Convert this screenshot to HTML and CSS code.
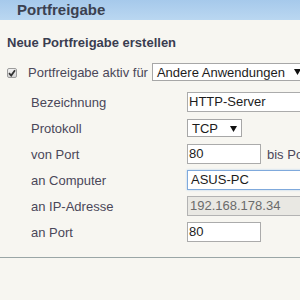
FILE: index.html
```html
<!DOCTYPE html>
<html lang="de">
<head>
    <meta charset="UTF-8">
    <title>Portfreigabe</title>
    <link rel="stylesheet" href="styles.css">
</head>
<body>
    <div class="header">Portfreigabe</div>
    <div class="content">
        <h2>Neue Portfreigabe erstellen</h2>
        <div class="active-row">
            <span class="check">
                <svg width="8" height="8" viewBox="0 0 8 8"><path d="M1 4.2 L3.2 6.5 L7 1.2" fill="none" stroke="#333" stroke-width="1.8"/></svg>
            </span>
            <span class="active-label">Portfreigabe aktiv für</span>
            <div class="select select-wide">Andere Anwendungen
                <svg class="arrow" width="7" height="6" viewBox="0 0 7 6"><path d="M0 0 H7 L3.5 6 Z" fill="#111"/></svg>
            </div>
        </div>
        <div class="fields">
            <div class="label">Bezeichnung</div>
            <div class="value"><div class="input input-long">HTTP-Server</div></div>

            <div class="label">Protokoll</div>
            <div class="value">
                <div class="select select-small">TCP
                    <svg class="arrow" width="7" height="6" viewBox="0 0 7 6"><path d="M0 0 H7 L3.5 6 Z" fill="#111"/></svg>
                </div>
            </div>

            <div class="label">von Port</div>
            <div class="value"><div class="input input-port">80</div><span class="bis">bis Port</span></div>

            <div class="label">an Computer</div>
            <div class="value"><div class="input input-long focused">ASUS-PC</div></div>

            <div class="label">an IP-Adresse</div>
            <div class="value"><div class="input input-long disabled">192.168.178.34</div></div>

            <div class="label">an Port</div>
            <div class="value"><div class="input input-port">80</div></div>
        </div>
    </div>
    <div class="divider"></div>
</body>
</html>
```

FILE: styles.css
```css
* {
    box-sizing: border-box;
    margin: 0;
    padding: 0;
}
html, body {
    overflow: hidden;
}
body {
    font-family: "Liberation Sans", Arial, sans-serif;
    font-size: 13px;
    background: #f7f6f1;
    color: #4a4759;
    width: 300px;
    height: 300px;
}
.header {
    height: 20px;
    line-height: 20px;
    padding-left: 17px;
    font-size: 15px;
    font-weight: bold;
    color: #3b4150;
    background: linear-gradient(to bottom, #a6c9eb, #bad7f1);
    white-space: nowrap;
}
.content {
    padding-left: 7px;
}
h2 {
    font-size: 13px;
    line-height: 16px;
    font-weight: bold;
    color: #3a3d50;
    margin-top: 15px;
    white-space: nowrap;
}
.active-row {
    display: flex;
    align-items: center;
    height: 18px;
    margin-top: 12px;
    white-space: nowrap;
}
.check {
    width: 10px;
    height: 10px;
    border: 1px solid #9c9c9c;
    border-radius: 2px;
    background: linear-gradient(to bottom, #f2f2f2, #d6d6d6);
    display: flex;
    align-items: center;
    justify-content: center;
    margin-right: 11px;
    margin-top: 1px;
}
.active-label {
    margin-right: 4px;
}
.select {
    height: 18px;
    border: 1px solid #a7a7a7;
    background: #fff;
    color: #1c1c1c;
    display: flex;
    align-items: center;
    padding-left: 4px;
    white-space: nowrap;
    flex-shrink: 0;
}
.select-wide {
    width: 160px;
}
.select-wide .arrow {
    margin-left: 9px;
}
.select-small {
    width: 55px;
}
.select-small .arrow {
    margin-left: 12px;
    margin-top: 1px;
}
.fields {
    display: grid;
    grid-template-columns: 156px 1fr;
    grid-auto-rows: 26px;
    margin-top: 8px;
    padding-left: 24px;
}
.label {
    display: flex;
    align-items: center;
    white-space: nowrap;
}
.value {
    display: flex;
    align-items: center;
    white-space: nowrap;
}
.input {
    height: 20px;
    border: 1px solid #ababab;
    background: #fff;
    color: #1c1c1c;
    padding-left: 1px;
    line-height: 18px;
    flex-shrink: 0;
}
.input-long {
    width: 140px;
}
.input-port {
    width: 74px;
}
.input.focused {
    border-color: #7fa9dc;
    box-shadow: 0 0 2px #b3cff0;
    padding-left: 3px;
}
.input.disabled {
    background: #e9e8e3;
    color: #6b6b6b;
    border-color: #b3b3b3;
    padding-left: 2px;
}
.bis {
    margin-left: 6px;
}
.divider {
    margin-top: 12px;
    height: 1px;
    background: #9aa6a6;
}
```
